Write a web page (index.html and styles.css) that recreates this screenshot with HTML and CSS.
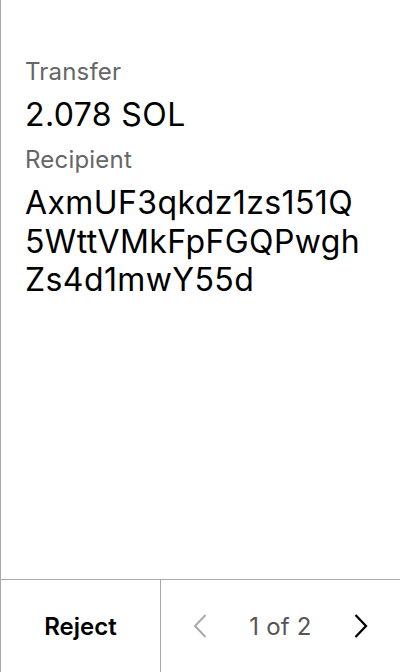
FILE: index.html
```html
<!DOCTYPE html>
<html>
<head>
<meta charset="utf-8">
<link rel="stylesheet" href="styles.css">
</head>
<body>
<div class="screen">
  <main class="content">
    <div class="label">Transfer</div>
    <div class="value">2.078 SOL</div>
    <div class="label">Recipient</div>
    <div class="value address">AxmUF3qkdz1zs151Q<br>5WttVMkFpFGQPwgh<br>Zs4d1mwY55d</div>
  </main>
  <footer class="footer">
    <div class="reject">Reject</div>
    <div class="pager">
      <svg class="chev" width="14" height="24" viewBox="0 0 14 24"><path d="M12.5 1 L2 12 L12.5 23" fill="none" stroke="#aaaaaa" stroke-width="2"/></svg>
      <span class="count">1 of 2</span>
      <svg class="chev" width="14" height="24" viewBox="0 0 14 24"><path d="M1.5 1 L12 12 L1.5 23" fill="none" stroke="#000" stroke-width="2.3"/></svg>
    </div>
  </footer>
</div>
</body>
</html>
```
FILE: styles.css
```css
html, body {
  margin: 0;
  padding: 0;
  background: #fff;
}
body {
  font-family: Inter, "Noto Sans", sans-serif;
  color: #000;
}
.screen {
  width: 400px;
  height: 672px;
  box-sizing: border-box;
  border-left: 1px solid #aaaaaa;
  display: flex;
  flex-direction: column;
}
.content {
  flex: 1;
  padding: 57px 0 0 24px;
}
.label {
  font-size: 24px;
  line-height: 30px;
  color: #666666;
  margin-bottom: 9px;
  letter-spacing: 0.2px;
}
.value {
  font-size: 32px;
  line-height: 38px;
  margin-bottom: 11px;
  letter-spacing: 0.4px;
}
.address {
  line-height: 38.5px;
}
.footer {
  height: 92px;
  border-top: 1px solid #aaaaaa;
  display: flex;
}
.reject {
  width: 159px;
  border-right: 1px solid #aaaaaa;
  display: flex;
  align-items: center;
  justify-content: center;
  font-size: 24px;
  font-weight: 600;
}
.pager {
  flex: 1;
  display: flex;
  align-items: center;
  justify-content: space-between;
  padding: 0 32px 0 32px;
}
.chev {
  display: block;
}
.count {
  font-size: 24px;
  color: #555555;
  letter-spacing: 0.2px;
}
```
